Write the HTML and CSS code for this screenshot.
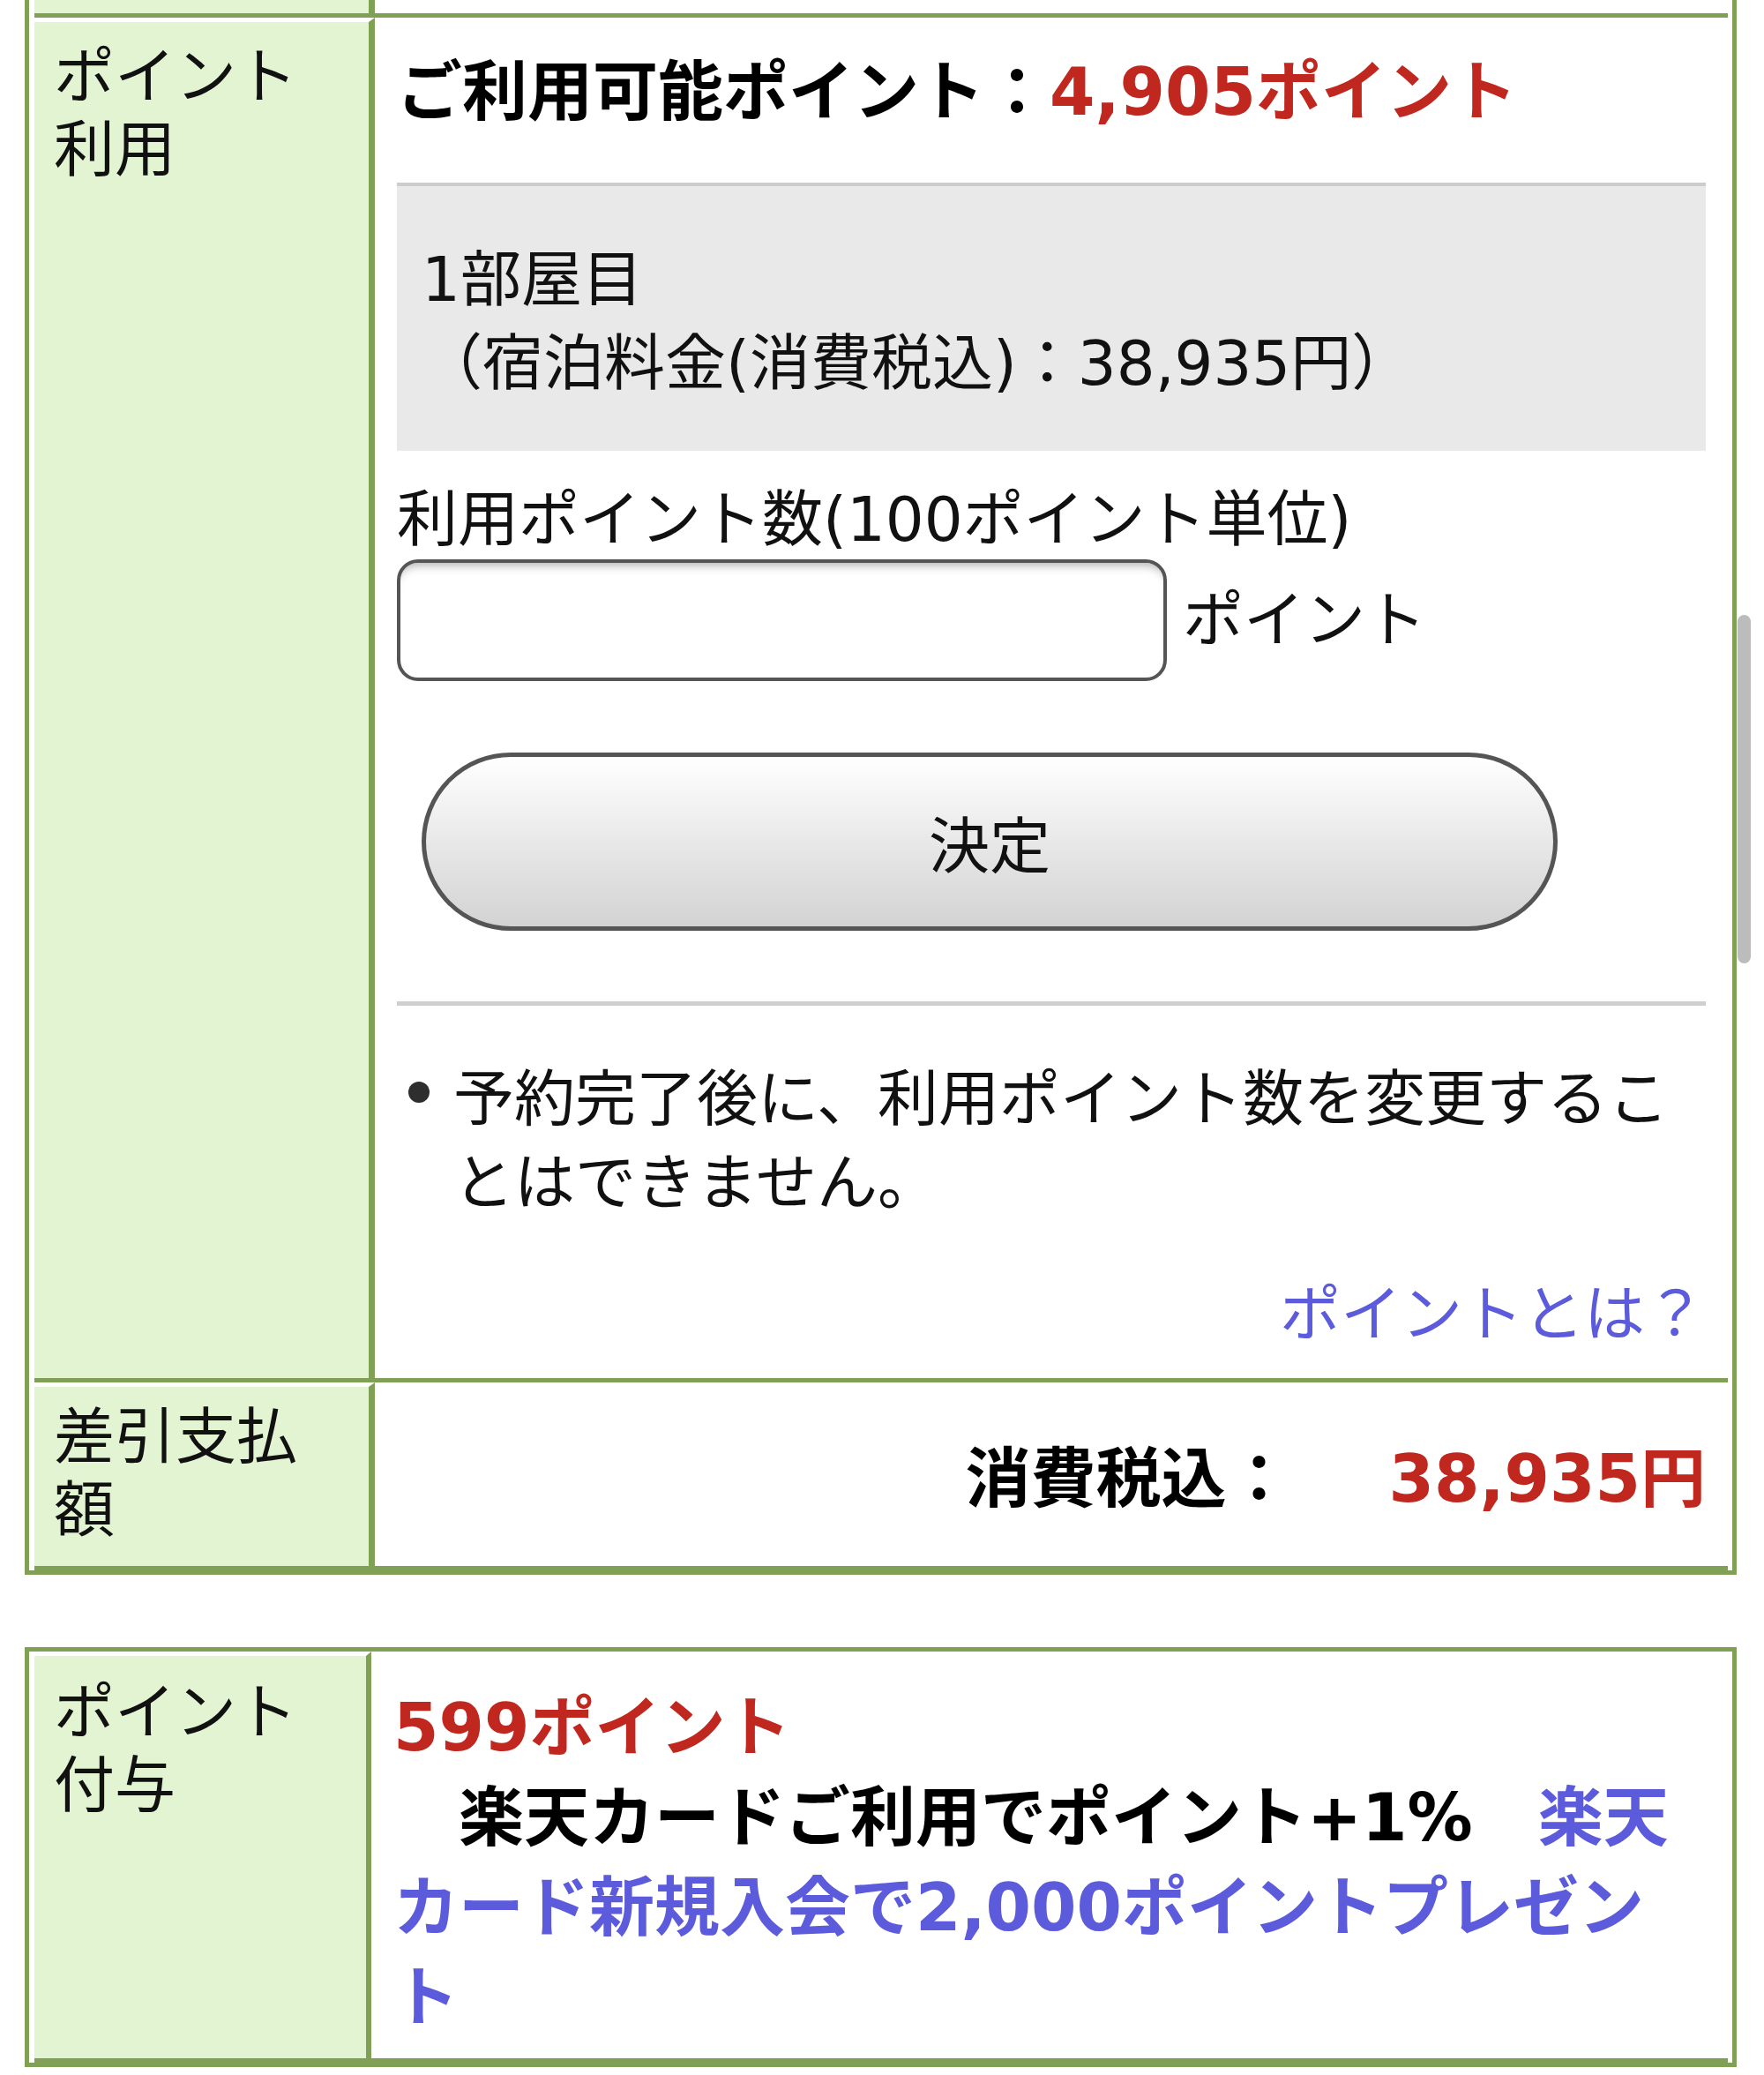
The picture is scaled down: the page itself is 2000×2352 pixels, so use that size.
FILE: index.html
```html
<!DOCTYPE html>
<html lang="ja">
<head>
<meta charset="utf-8">
<title>ポイント利用</title>
<link rel="stylesheet" href="styles.css">
</head>
<body>
<div class="page">
  <div class="tbl tbl-first">
    <div class="row row-clip">
      <div class="th"></div>
      <div class="td"></div>
    </div>
    <div class="row">
      <div class="th">ポイント利用</div>
      <div class="td">
        <div class="avail">ご利用可能ポイント：<span class="red">4,905ポイント</span></div>
        <div class="room">1部屋目<br>（宿泊料金(消費税込)：38,935円）</div>
        <div class="unit-label">利用ポイント数(100ポイント単位)</div>
        <div class="input-row">
          <input class="pt-input" type="text" aria-label="利用ポイント数">
          <span class="input-unit">ポイント</span>
        </div>
        <button class="btn" type="button">決定</button>
        <div class="divider"></div>
        <div class="note">
          <span class="dot"></span>
          <span class="note-text">予約完了後に、利用ポイント数を変更することはできません。</span>
        </div>
        <div class="link-row"><a class="link" href="#">ポイントとは？</a></div>
      </div>
    </div>
    <div class="row row-total">
      <div class="th">差引支払額</div>
      <div class="td">
        <span class="total-label">消費税込：</span><span class="amount red">38,935円</span>
      </div>
    </div>
  </div>

  <div class="tbl tbl-second">
    <div class="row">
      <div class="th">ポイント付与</div>
      <div class="td">
        <div class="award"><span class="red">599ポイント</span><br>　楽天カードご利用でポイント+1%　<a class="link" href="#">楽天カード新規入会で2,000ポイントプレゼント</a></div>
      </div>
    </div>
  </div>

  <div class="scrollbar"></div>
</div>
</body>
</html>
```

FILE: styles.css
```css
html, body {
  margin: 0;
  padding: 0;
  background: #ffffff;
}

body {
  font-family: "DejaVu Sans", "Noto Sans CJK JP", sans-serif;
  color: #111111;
}

.page {
  position: relative;
  width: 2000px;
  height: 2352px;
  overflow: hidden;
}

/* ---------- table frame ---------- */
.tbl {
  box-sizing: border-box;
  width: 1941px;
  margin-left: 28px;
  border: 5px solid #7fa055;
  padding: 0 5px 0 6px;
  background: #ffffff;
}

.tbl-first {
  border-top: 0;
}

.tbl-second {
  margin-top: 82px;
}

.row {
  display: grid;
  grid-template-columns: 386px 1fr;
  border-bottom: 5px solid #7fa055;
}

.tbl-second .row {
  grid-template-columns: 382px 1fr;
}

.th {
  box-sizing: border-box;
  background: #e2f4d1;
  border-top: 5px solid #ffffff;
  border-right: 7px solid #7fa055;
  padding: 21px 40px 0 22px;
  font-size: 69px;
  line-height: 83px;
  color: #111111;
}

.tbl-second .th {
  border-right-width: 6px;
  padding-top: 23px;
}

.td {
  min-width: 0;
  padding: 34px 25px 30px 25px;
}

.row-clip {
  height: 15px;
}

.row-clip .th {
  border-top: 0;
  padding: 0;
}

.row-clip .td {
  padding: 0;
}

.red {
  color: #c0281f;
}

/* ---------- point usage ---------- */
.avail {
  font-size: 74px;
  font-weight: bold;
  line-height: 100px;
  color: #000000;
}

.room {
  margin-top: 53px;
  background: #e9e9e9;
  border-top: 4px solid #cccccc;
  padding: 59px 28px 51px 28px;
  font-size: 69px;
  line-height: 95px;
}

.unit-label {
  margin-top: 37px;
  font-size: 69px;
  line-height: 83px;
}

.input-row {
  display: flex;
  align-items: center;
  gap: 18px;
  margin-top: 3px;
}

.pt-input {
  box-sizing: border-box;
  width: 873px;
  height: 138px;
  margin: 0;
  padding: 0 20px;
  border: 4px solid #555555;
  border-radius: 24px;
  background: #ffffff;
  box-shadow: inset 0 12px 12px -10px rgba(0, 0, 0, 0.35);
  outline: none;
  font-family: inherit;
  font-size: 69px;
}

.input-unit {
  font-size: 69px;
  line-height: 83px;
}

.btn {
  display: block;
  box-sizing: border-box;
  width: 1288px;
  height: 202px;
  margin: 81px 0 0 28px;
  padding: 0;
  border: 5px solid #555555;
  border-radius: 101px;
  background: linear-gradient(#ffffff 0%, #f6f6f6 20%, #e6e6e6 55%, #d3d3d3 100%);
  font-family: inherit;
  font-size: 69px;
  color: #111111;
}

.divider {
  height: 5px;
  margin-top: 80px;
  background: #cfcfcf;
}

.note {
  display: flex;
  margin-top: 59px;
  font-size: 69px;
  line-height: 95px;
}

.dot {
  flex: none;
  width: 24px;
  height: 24px;
  margin: 27px 27px 0 13px;
  border-radius: 50%;
  background: #2e2e2e;
}

.note-text {
  flex: 1;
  min-width: 0;
}

.link-row {
  margin-top: 60px;
  text-align: right;
  font-size: 69px;
  line-height: 83px;
}

.link {
  color: #5b5bdc;
  text-decoration: none;
}

/* ---------- total row ---------- */
.row-total .th {
  padding-top: 16px;
  padding-bottom: 21px;
}

.row-total .td {
  display: flex;
  justify-content: flex-end;
  align-items: center;
  padding: 10px 25px 0 25px;
  font-size: 74px;
  font-weight: bold;
  line-height: 100px;
  color: #000000;
}

.amount {
  margin-left: 110px;
}

/* ---------- point award ---------- */
.tbl-second .td {
  padding-top: 35px;
  padding-bottom: 18px;
}

.award {
  font-size: 74px;
  font-weight: bold;
  line-height: 102px;
  color: #000000;
}

/* ---------- overlay scrollbar ---------- */
.scrollbar {
  position: absolute;
  left: 1970px;
  top: 697px;
  width: 15px;
  height: 395px;
  border-radius: 8px;
  background: #bcbcbc;
}
```
